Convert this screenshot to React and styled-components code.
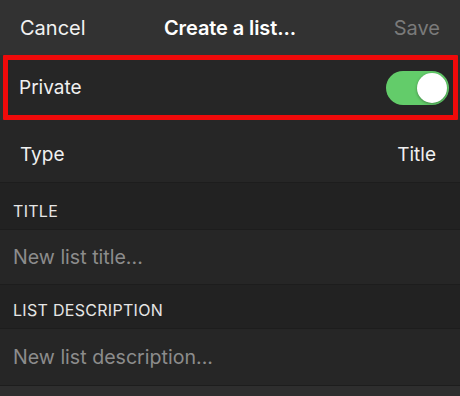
import React, { useState } from 'react';
import styled, { createGlobalStyle } from 'styled-components';

const GlobalStyle = createGlobalStyle`
    body {
        margin: 0;
        background: #2e2e2e;
        font-family: Inter, "Noto Sans", "Liberation Sans", sans-serif;
        -webkit-font-smoothing: antialiased;
    }
`;

const Screen = styled.div`
    width: 460px;
    height: 396px;
    overflow: hidden;
    background: #2e2e2e;
    display: flex;
    flex-direction: column;
`;

const Header = styled.div`
    height: 55px;
    flex-shrink: 0;
    display: grid;
    grid-template-columns: 1fr auto 1fr;
    align-items: center;
    padding: 0 20px;
    background: #323232;
    color: #fff;
    font-size: 20px;
`;

const NavButton = styled.span`
    justify-self: ${(p) => (p.$right ? 'end' : 'start')};
    color: ${(p) => (p.$disabled ? '#7a7a7a' : '#f2f2f2')};
`;

const HeaderTitle = styled.span`
    font-weight: 600;
    letter-spacing: -0.1px;
`;

const Highlight = styled.div`
    flex-shrink: 0;
    margin: 0 2px 0 3px;
    border: 5px solid #f00a0a;
    border-radius: 1px;
`;

const Row = styled.div`
    flex-shrink: 0;
    display: flex;
    align-items: center;
    justify-content: space-between;
    height: ${(p) => p.$height || 55}px;
    padding: ${(p) => p.$padT || 0}px ${(p) => p.$padR || 24}px 0 ${(p) => p.$padL || 20}px;
    box-sizing: border-box;
    background: #262626;
    color: #f0f0f0;
    font-size: 19px;
    border-bottom: ${(p) => (p.$line ? '1px solid #1d1d1d' : 'none')};
`;

const Placeholder = styled(Row)`
    color: #8c8c8c;
    padding-left: 13px;
    font-size: 19.6px;
`;

const SectionHeader = styled.div`
    flex-shrink: 0;
    display: flex;
    align-items: flex-end;
    height: ${(p) => p.$height}px;
    padding: 0 13px 8px;
    box-sizing: border-box;
    background: #222222;
    color: #e6e6e6;
    font-size: 16px;
    letter-spacing: 0.3px;
    border-bottom: 1px solid #1d1d1d;
`;

const Toggle = styled.button`
    width: 63px;
    height: 34px;
    border: none;
    padding: 2px;
    border-radius: 17px;
    background: ${(p) => (p.$on ? '#63cc6a' : '#4a4a4a')};
    display: flex;
    justify-content: ${(p) => (p.$on ? 'flex-end' : 'flex-start')};
    cursor: pointer;
`;

const Knob = styled.span`
    width: 30px;
    height: 30px;
    border-radius: 50%;
    background: #fff;
    box-shadow: 0 1px 3px rgba(0, 0, 0, 0.35);
`;

const App = () => {
    const [isPrivate, setIsPrivate] = useState(true);

    return (
        <Screen>
            <GlobalStyle />
            <Header>
                <NavButton>Cancel</NavButton>
                <HeaderTitle>Create a list...</HeaderTitle>
                <NavButton $right $disabled>Save</NavButton>
            </Header>
            <Highlight>
                <Row $padL={11} $padR={4}>
                    <span>Private</span>
                    <Toggle $on={isPrivate} onClick={() => setIsPrivate(!isPrivate)}>
                        <Knob />
                    </Toggle>
                </Row>
            </Highlight>
            <Row $height={63} $padT={6} $line>
                <span>Type</span>
                <span>Title</span>
            </Row>
            <SectionHeader $height={47}>TITLE</SectionHeader>
            <Placeholder $height={55} $line>New list title...</Placeholder>
            <SectionHeader $height={44}>LIST DESCRIPTION</SectionHeader>
            <Placeholder $height={57} $line>New list description...</Placeholder>
        </Screen>
    );
};

export default App;
